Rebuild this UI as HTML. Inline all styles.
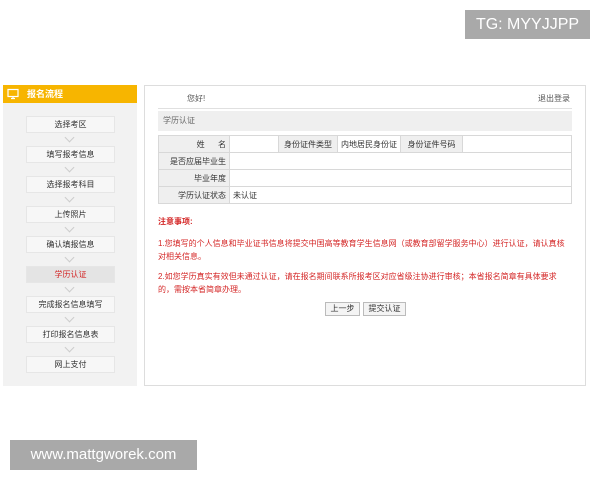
<!DOCTYPE html>
<html><head><meta charset="utf-8"><style>
*{margin:0;padding:0;box-sizing:border-box}
body{width:600px;height:480px;background:#fff;position:relative;overflow:hidden;font-family:"Liberation Sans","Noto Sans CJK SC",sans-serif;font-size:8px;color:#333}
.a{position:absolute}
.tg{left:465px;top:10px;width:125px;height:29px;background:#a9a9a9;color:#fff;font-size:16px;line-height:29px;text-align:center}
.wm{left:10px;top:440px;width:187px;height:30px;background:#a9a9a9;color:#fff;font-size:15px;line-height:30px;text-align:center}
.side{left:3px;top:85px;width:134px;height:301px;background:#f2f2f2}
.sh{left:3px;top:85px;width:134px;height:18px;background:#f7b500;color:#fff;font-weight:bold;font-size:9px;line-height:18px;padding-left:24px}
.it{left:26px;width:89px;height:17px;background:#f7f7f7;border:1px solid #e6e6e6;text-align:center;line-height:15px;font-size:8px;color:#333}
.ar{left:66px;width:7px;height:7px;border-right:1px solid #ccc;border-bottom:1px solid #ccc;transform:rotate(45deg)}
.main{left:144px;top:85px;width:442px;height:301px;border:1px solid #ddd;background:#fff}
table{position:absolute;left:158px;top:135px;width:414px;border-collapse:collapse;table-layout:fixed}
td{border:1px solid #d8d8d8;height:17px;line-height:15px;font-size:8px;padding:0 3px;white-space:nowrap;overflow:hidden}
td.l{background:#efefef;text-align:right}
.red{color:#d42626;font-size:8px;line-height:13px}
.btn{top:302px;height:14px;border:1px solid #bbb;background:#f4f4f4;font-size:8px;line-height:12px;text-align:center;color:#333}
</style></head><body>
<div class="a tg">TG: MYYJJPP</div>
<div class="a side"></div>
<div class="a sh">报名流程</div>
<svg class="a" style="left:7px;top:88px" width="12" height="12" viewBox="0 0 12 12"><rect x="1" y="1.5" width="10" height="7" fill="none" stroke="#fff" stroke-width="1.2"/><path d="M4 10.5h4M6 8.5v2" stroke="#fff" stroke-width="1.2"/></svg>
<div class="a it" style="top:116px">选择考区</div><div class="a ar" style="top:134px"></div>
<div class="a it" style="top:146px">填写报考信息</div><div class="a ar" style="top:164px"></div>
<div class="a it" style="top:176px">选择报考科目</div><div class="a ar" style="top:194px"></div>
<div class="a it" style="top:206px">上传照片</div><div class="a ar" style="top:224px"></div>
<div class="a it" style="top:236px">确认填报信息</div><div class="a ar" style="top:254px"></div>
<div class="a it" style="top:266px;background:#e4e4e4;color:#d42626">学历认证</div><div class="a ar" style="top:284px"></div>
<div class="a it" style="top:296px">完成报名信息填写</div><div class="a ar" style="top:314px"></div>
<div class="a it" style="top:326px">打印报名信息表</div><div class="a ar" style="top:344px"></div>
<div class="a it" style="top:356px">网上支付</div>
<div class="a main"></div>
<div class="a" style="left:187px;top:93px;font-size:8px;color:#555">您好!</div>
<div class="a" style="left:538px;top:93px;font-size:8px;color:#555">退出登录</div>
<div class="a" style="left:158px;top:108px;width:414px;height:1px;background:#e0e0e0"></div>
<div class="a" style="left:158px;top:111px;width:414px;height:20px;background:#efefef;line-height:20px;padding-left:5px;color:#666">学历认证</div>
<table>
<colgroup><col style="width:71px"><col style="width:49px"><col style="width:59px"><col style="width:63px"><col style="width:62px"><col></colgroup>
<tr><td class="l">姓&nbsp;&nbsp;&nbsp;&nbsp;&nbsp;&nbsp;名</td><td></td><td class="l" style="text-align:center">身份证件类型</td><td style="text-align:center">内地居民身份证</td><td class="l" style="text-align:center">身份证件号码</td><td></td></tr>
<tr><td class="l">是否应届毕业生</td><td colspan="5"></td></tr>
<tr><td class="l">毕业年度</td><td colspan="5"></td></tr>
<tr><td class="l">学历认证状态</td><td colspan="5">未认证</td></tr>
</table>
<div class="a red" style="left:158px;top:215px;font-weight:bold">注意事项:</div>
<div class="a red" style="left:158px;top:237px;width:414px">1.您填写的个人信息和毕业证书信息将提交中国高等教育学生信息网（或教育部留学服务中心）进行认证，请认真核对相关信息。</div>
<div class="a red" style="left:158px;top:270px;width:414px">2.如您学历真实有效但未通过认证，请在报名期间联系所报考区对应省级注协进行审核；本省报名简章有具体要求的，需按本省简章办理。</div>
<div class="a btn" style="left:325px;width:35px">上一步</div>
<div class="a btn" style="left:363px;width:43px">提交认证</div>
<div class="a wm">www.mattgworek.com</div>
</body></html>
